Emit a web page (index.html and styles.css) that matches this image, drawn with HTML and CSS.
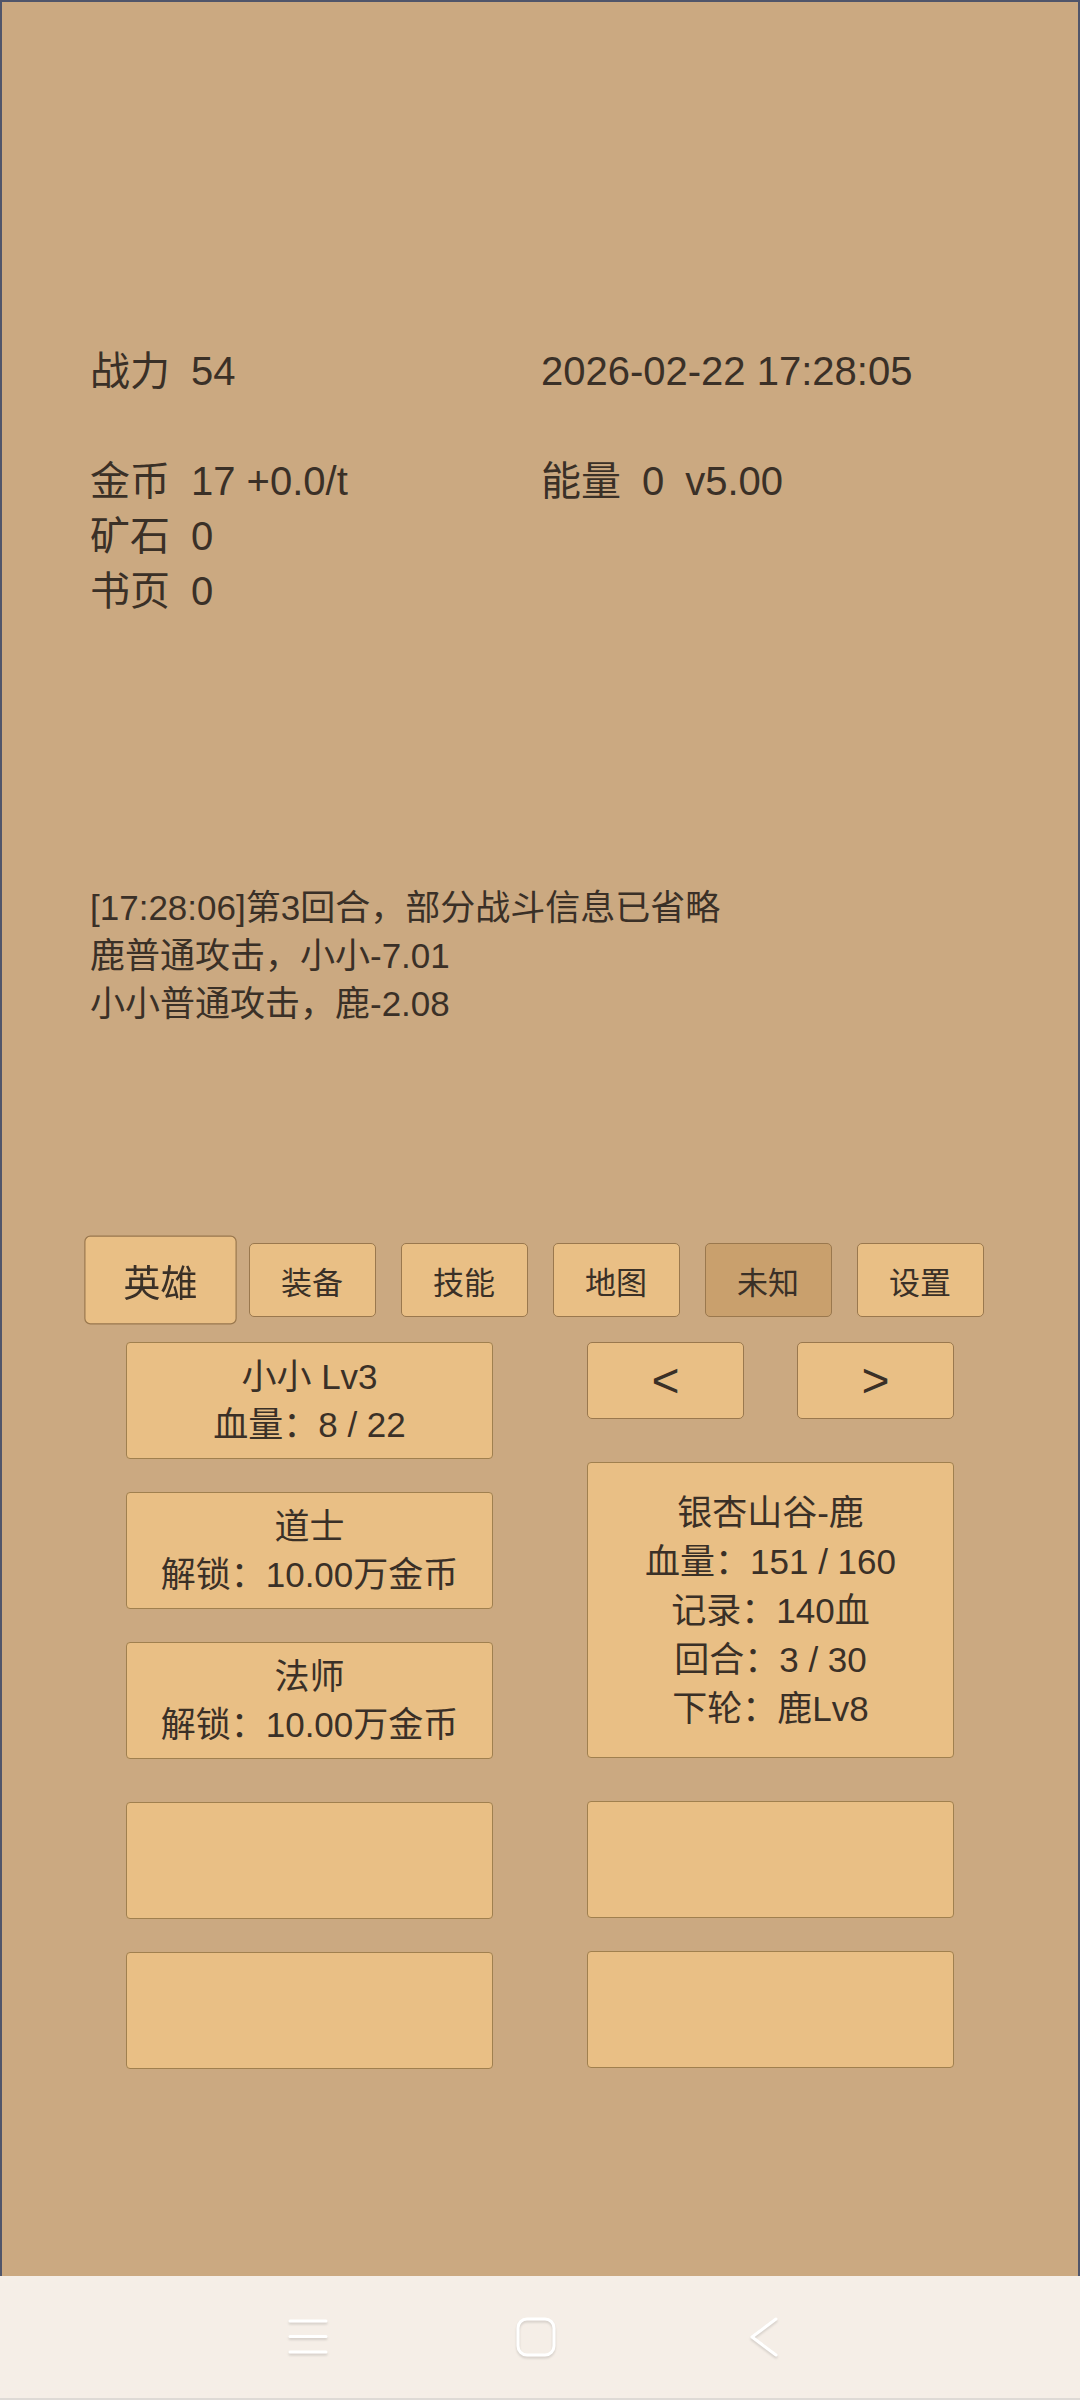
FILE: index.html
```html
<!DOCTYPE html>
<html lang="zh-CN">

<head>
    <meta charset="UTF-8" />
    <meta name="viewport" content="width=device-width, initial-scale=1.0" />
    <title>挂机英雄</title>
    <link rel="stylesheet" href="styles.css">
</head>

<body>
    <div class="screen">
        <div class="app">
            <div class="stats">
                <div class="stat"><span>战力</span><span>54</span></div>
                <div class="stat">2026-02-22 17:28:05</div>
                <div class="stat empty"></div>
                <div class="stat empty"></div>
                <div class="stat"><span>金币</span><span>17 +0.0/t</span></div>
                <div class="stat"><span>能量</span><span>0</span><span>v5.00</span></div>
                <div class="stat"><span>矿石</span><span>0</span></div>
                <div class="stat empty"></div>
                <div class="stat"><span>书页</span><span>0</span></div>
            </div>

            <div class="log">
                <div>[17:28:06]第3回合，部分战斗信息已省略</div>
                <div>鹿普通攻击，小小-7.01</div>
                <div>小小普通攻击，鹿-2.08</div>
            </div>

            <div class="tabs">
                <button class="tab active">英雄</button>
                <button class="tab">装备</button>
                <button class="tab">技能</button>
                <button class="tab">地图</button>
                <button class="tab disabled">未知</button>
                <button class="tab">设置</button>
            </div>

            <div class="board">
                <div class="column">
                    <div class="card">
                        <div>小小 Lv3</div>
                        <div>血量：8 / 22</div>
                    </div>
                    <div class="card">
                        <div>道士</div>
                        <div>解锁：10.00万金币</div>
                    </div>
                    <div class="card">
                        <div>法师</div>
                        <div>解锁：10.00万金币</div>
                    </div>
                    <div class="card lower"></div>
                    <div class="card"></div>
                </div>

                <div class="column">
                    <div class="arrows">
                        <button class="arrow">&lt;</button>
                        <button class="arrow">&gt;</button>
                    </div>
                    <div class="card enemy">
                        <div>银杏山谷-鹿</div>
                        <div>血量：151 / 160</div>
                        <div>记录：140血</div>
                        <div>回合：3 / 30</div>
                        <div>下轮：鹿Lv8</div>
                    </div>
                    <div class="card lower"></div>
                    <div class="card"></div>
                </div>
            </div>
        </div>

        <div class="nav">
            <svg class="nav-icon" viewBox="0 0 40 40">
                <line x1="2" y1="4" x2="38" y2="4" />
                <line x1="2" y1="19.5" x2="38" y2="19.5" />
                <line x1="2" y1="35" x2="38" y2="35" />
            </svg>
            <svg class="nav-icon" viewBox="0 0 40 40">
                <rect x="2" y="2" width="36" height="36" rx="9" />
            </svg>
            <svg class="nav-icon" viewBox="0 0 40 40">
                <polyline points="32,2 8,20 32,38" />
            </svg>
        </div>
    </div>
</body>

</html>
```

FILE: styles.css
```css
body {
    margin: 0;
    font-family: "Liberation Sans", "Noto Sans CJK SC", sans-serif;
    color: #3a3027;
}

.screen {
    width: 1080px;
    height: 2400px;
    display: flex;
    flex-direction: column;
}

.app {
    height: 2276px;
    box-sizing: border-box;
    background: #cba981;
    border: 2px solid #50556a;
    border-bottom: none;
    padding-top: 342px;
}

.stats {
    display: grid;
    grid-template-columns: 451px 1fr;
    grid-auto-rows: 55px;
    padding-left: 88px;
    font-size: 40px;
    line-height: 55px;
}

.stat {
    display: flex;
    gap: 21px;
    white-space: nowrap;
}

.log {
    margin-top: 265px;
    padding-left: 88px;
    font-size: 35px;
    line-height: 48px;
}

.tabs {
    margin-top: 215px;
    display: flex;
    justify-content: center;
    gap: 25px;
}

button {
    font-family: inherit;
    color: inherit;
    background: #e9bf85;
    border: 1.5px solid #9a784e;
    border-radius: 5px;
    padding: 0;
    cursor: pointer;
}

.tab {
    width: 127px;
    height: 74px;
    font-size: 31px;
}

.tab.active {
    transform: scale(1.2);
}

.tab.disabled {
    background: #c9a06d;
}

.board {
    margin-top: 25px;
    display: flex;
    justify-content: center;
    gap: 94px;
}

.column {
    width: 367px;
    display: flex;
    flex-direction: column;
    gap: 33px;
}

.card {
    height: 117px;
    box-sizing: border-box;
    background: #e9bf85;
    border: 1.5px solid #a0804f;
    border-radius: 4px;
    display: flex;
    flex-direction: column;
    justify-content: center;
    align-items: center;
    font-size: 35px;
    line-height: 48px;
}

.card.lower {
    margin-top: 10px;
}

.card.enemy {
    height: 296px;
    line-height: 49px;
    margin-top: 10px;
}

.arrows {
    display: flex;
    justify-content: space-between;
}

.arrow {
    width: 157px;
    height: 77px;
    font-size: 48px;
    line-height: 1;
}

.nav {
    flex: 1;
    background: #f5eee7;
    border-bottom: 2px solid #dedad6;
    display: flex;
    justify-content: center;
    align-items: center;
    gap: 188px;
    padding-right: 8px;
}

.nav-icon {
    width: 40px;
    height: 40px;
    fill: none;
    stroke: #ffffff;
    stroke-width: 3;
    stroke-linecap: round;
    stroke-linejoin: round;
    filter: drop-shadow(0 2px 1px rgba(0, 0, 0, 0.13));
}
```
